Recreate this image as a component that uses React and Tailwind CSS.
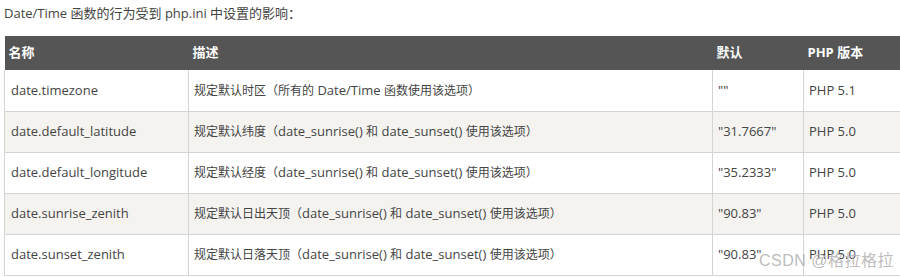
import React from 'react';

const rows = [
  { name: 'date.timezone', desc: '规定默认时区（所有的 Date/Time 函数使用该选项）', def: '""', ver: 'PHP 5.1' },
  { name: 'date.default_latitude', desc: '规定默认纬度（date_sunrise() 和 date_sunset() 使用该选项）', def: '"31.7667"', ver: 'PHP 5.0' },
  { name: 'date.default_longitude', desc: '规定默认经度（date_sunrise() 和 date_sunset() 使用该选项）', def: '"35.2333"', ver: 'PHP 5.0' },
  { name: 'date.sunrise_zenith', desc: '规定默认日出天顶（date_sunrise() 和 date_sunset() 使用该选项）', def: '"90.83"', ver: 'PHP 5.0' },
  { name: 'date.sunset_zenith', desc: '规定默认日落天顶（date_sunrise() 和 date_sunset() 使用该选项）', def: '"90.83"', ver: 'PHP 5.0' },
];

const font = { fontFamily: '"Open Sans", "Noto Sans CJK SC", sans-serif' };

// latin runs a bit larger than the CJK ones, like the original page
const Mixed = ({ text }) =>
  text.split(/([\u0000-\u00ff]+)/).filter(Boolean).map((part, i) =>
    /^[\u0000-\u00ff]+$/.test(part)
      ? <span key={i} className="text-[13px]">{part}</span>
      : <span key={i} className="text-[12px]">{part}</span>
  );

export default function App() {
  return (
    <div className="relative w-[900px] h-[277px] overflow-hidden bg-white text-[13px] text-[#444]" style={font}>
      <p className="pl-1 pt-[4px] h-[36px] leading-[18px]">Date/Time 函数的行为受到 php.ini 中设置的影响：</p>
      <table className="ml-1 w-[896px] border-collapse table-fixed">
        <thead>
          <tr className="bg-[#555555] text-white h-[34px] text-[13px]">
            <th className="w-[184px] text-left font-bold pl-1">名称</th>
            <th className="w-[524px] text-left font-bold pl-1">描述</th>
            <th className="w-[91px] text-left font-bold pl-1">默认</th>
            <th className="text-left font-bold pl-1">PHP 版本</th>
          </tr>
        </thead>
        <tbody>
          {rows.map((r, i) => (
            <tr key={r.name} className={`h-[41px] border-b border-[#d4d4d4] ${i % 2 ? 'bg-[#f4f3f0]' : 'bg-white'}`}>
              <td className="border-l border-r border-[#d4d4d4] pl-[6px] text-[13px]">{r.name}</td>
              <td className="border-r border-[#d4d4d4] pl-[5px]"><Mixed text={r.desc} /></td>
              <td className="border-r border-[#d4d4d4] pl-[5px]">{r.def}</td>
              <td className="pl-[5px]">{r.ver}</td>
            </tr>
          ))}
        </tbody>
      </table>
      <div className="absolute right-[6px] bottom-[4px] text-[16px] text-[#b4b4b4]/90 tracking-[0.5px]" style={{ fontFamily: '"Liberation Sans", "Noto Sans CJK SC", sans-serif' }}>
        CSDN @格拉格拉
      </div>
    </div>
  );
}
